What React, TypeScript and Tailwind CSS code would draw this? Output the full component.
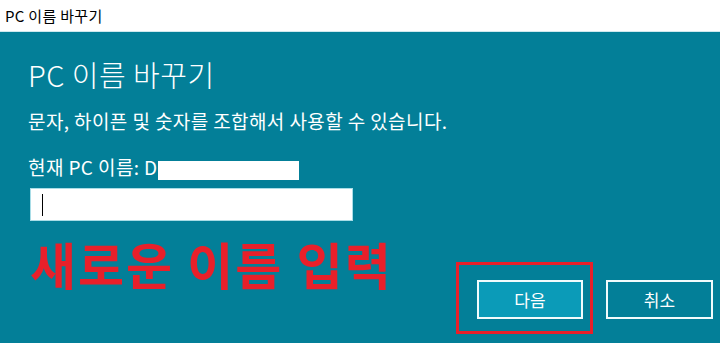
const FONT = { fontFamily: '"Noto Sans CJK KR", "Noto Sans", sans-serif' };

export default function App() {
  return (
    <div className="w-[720px] h-[343px] flex flex-col overflow-hidden bg-[#037f98]" style={FONT}>
      {/* Title bar */}
      <div className="h-[32px] bg-white border-b border-[#cfe9ee] flex items-center pl-[5px] shrink-0">
        <span className="text-[15px] text-black leading-none tracking-[0.3px]">PC 이름 바꾸기</span>
      </div>

      {/* Body */}
      <div className="flex-1 flex flex-col pl-[28px] pr-[7px]">
        <h1 className="mt-[23px] text-[29px] font-light text-white leading-[38px] tracking-[0.5px]">PC 이름 바꾸기</h1>
        <p className="mt-[15px] text-[19px] text-white leading-[26px] tracking-[0.4px]">
          문자, 하이픈 및 숫자를 조합해서 사용할 수 있습니다.
        </p>
        <div className="mt-[20px] flex items-start text-[19px] text-white leading-[26px] tracking-[0.4px]">
          <span>현재 PC 이름: D</span>
          <span className="inline-block w-[141px] h-[19px] bg-white mt-[7px]" />
        </div>
        <div className="mt-[8px] ml-[2px] w-[323px] h-[33px] bg-white border border-[#a9dde7] flex items-center pl-[11px]">
          <span className="w-px h-[22px] bg-black" />
        </div>

        <div className="flex items-start justify-between">
          <div className="mt-[14px] ml-[2px] text-[50px] font-bold text-[#e8202a] leading-[56px] tracking-[2px]">
            새로운 이름 입력
          </div>
          <div className="flex items-start mt-[41px]">
            <div className="border-[3px] border-[#e8202a] pl-[18px] pr-[7px] pt-[15px] pb-[12px]">
              <button className="w-[106px] h-[39px] bg-[#0b9bb8] border-2 border-[#f2fbfc] text-white text-[17px]">
                다음
              </button>
            </div>
            <button className="ml-[13px] mt-[18px] w-[107px] h-[39px] bg-[#037f98] border-2 border-[#f2fbfc] text-white text-[17px]">
              취소
            </button>
          </div>
        </div>
      </div>
    </div>
  );
}
